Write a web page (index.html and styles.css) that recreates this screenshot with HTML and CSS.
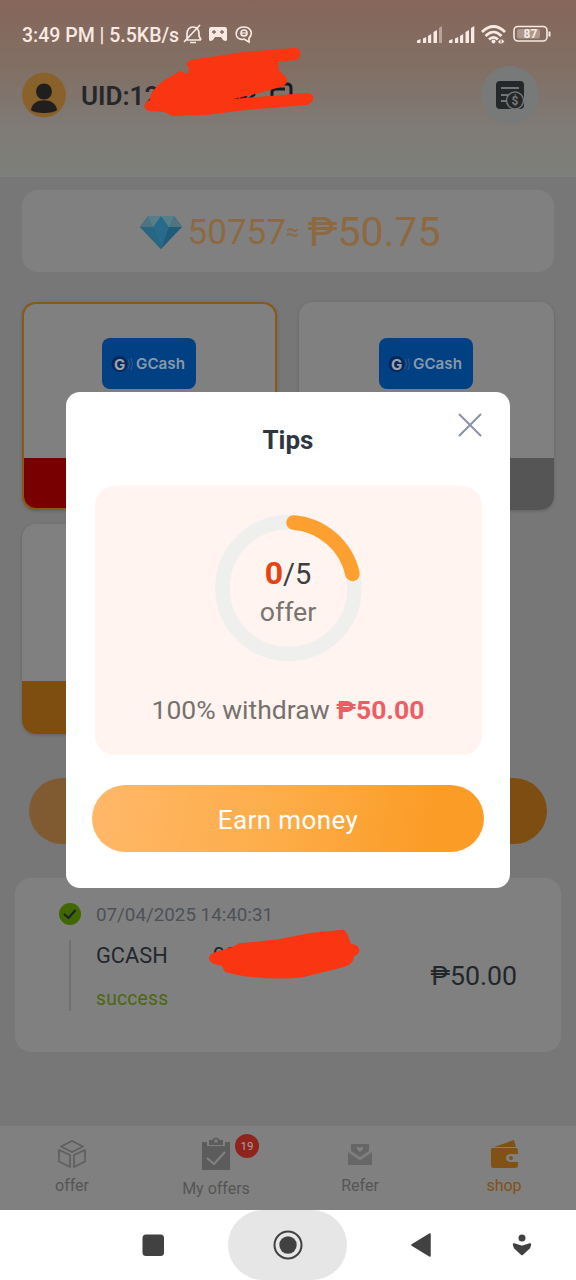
FILE: index.html
```html
<!DOCTYPE html>
<html lang="en">
<head>
<meta charset="utf-8">
<title>Shop</title>
<link rel="stylesheet" href="styles.css">
</head>
<body>
<div class="screen">
  <header class="header">
    <div class="status">
      <span class="clock">3:49 PM | 5.5KB/s</span>
      <svg class="status-left" width="74" height="24" viewBox="0 0 74 24" fill="none" stroke="#f8e9e3" stroke-width="1.7">
        <path d="M3 17H19M5 16V11C5 7 7 4 11 4S17 7 17 11V13L19 17M2 19L18 2M8 19.500H14"/>
        <path d="M29 4H43Q45 4 45 7V17Q44 19 41 17L39 14H33L31 17Q28 19 27 17V7Q27 4 29 4Z" fill="#f8e9e3" stroke="none"/>
        <path d="M32 7V11M30 9H34M38 9H42M40 7V11" stroke="#7e6d62" stroke-width="1.300"/>
        <path d="M67 15C72 10 68 4 62 4C53 4 52 14 58 16Q61 17 62 16L67 19Z"/>
        <circle cx="62" cy="10" r="3"/><path d="M60 10H64" stroke-width="1.200"/>
      </svg>
      <svg class="status-right" width="136" height="22" viewBox="0 0 136 22" fill="#f8e9e3">
        <path d="M1 16.500l3.500-1.500v4H1zM7 14.500l3.200-1.500v6H7zM12 12l3.200-2v9H12zM17.500 8L21 6v13h-3.500z"/><path d="M23 4l3-2v17h-3z" opacity=".45"/>
        <path d="M33 16.500l3.500-1.500v4H33zM39 14.500l3.200-1.500v6H39zM44 12l3.200-2v9H44zM49.500 8L53 6v13h-3.500zM55 4l3.300-2v17H55z"/>
        <g fill="none" stroke="#f8e9e3" stroke-width="2.700"><path d="M66 8Q77.500-3 89 8M69.500 12Q77.500 4 85.500 12M73 15.500Q77.500 11 82 15.500"/></g>
        <circle cx="77.500" cy="17.500" r="2"/><path d="M82 18l2.500-3v5zM85.500 15l3 2.500-3 2.500z"/>
        <rect x="98" y="2.500" width="33" height="14.500" rx="4" fill="none" stroke="#f8e9e3" stroke-width="1.600"/>
        <rect x="101" y="5" width="23" height="9.500" rx="2" opacity=".35"/><path d="M132.500 7.500h2v5h-2z"/>
        <text x="107.500" y="14.300" class="battery">87</text>
      </svg>
    </div>
    <div class="profile">
      <svg class="avatar" width="44" height="46" viewBox="0 0 44 46"><ellipse cx="22" cy="23" rx="22" ry="22.500" fill="#89622b"/><circle cx="22" cy="19.500" r="8" fill="#211f1d"/><path d="M9 38C10 25 34 25 35 38C32 42 12 42 9 38Z" fill="#211f1d"/></svg>
      <span class="uid">UID:12</span>
      <span class="bill"><svg width="30" height="30" viewBox="0 0 30 30"><rect x="1" y="1" width="28" height="28" rx="4" fill="#25282a"/><path d="M6 8H24M6 15H14M6 21H11" stroke="#737675" stroke-width="2.200"/><circle cx="20" cy="20.500" r="8.500" fill="#25282a" stroke="#737675" stroke-width="1.500"/><text x="20" y="24.500" class="dollar">$</text></svg></span>
    </div>
    <svg class="scribble scribble-top" width="180" height="76" viewBox="0 0 180 76">
      <path d="M91 53L98 51M99 52L106 49M108 52L114 47" fill="none" stroke="#171b20" stroke-width="2.500"/>
      <path d="M131 49V45Q131 42 135 42H144M135 38Q137 37 140 37H146Q150 37 150 41V48" fill="none" stroke="#171b20" stroke-width="3"/>
      <path d="M48 20C42 17 48 12 56 12L103 5L153 1C161 0 161 11 155 13L137 15L138 24L145 30Q148 35 143 39L118 46L92 52L165 46C175 45 174 57 165 58L105 63L65 68L32 69L23 65L9 64C1 63 2 55 9 53Q8 45 22 34L39 24L47 27Z" fill="#fa3511"/>
    </svg>
  </header>

  <main class="content">
    <section class="balance">
      <svg width="42" height="34" viewBox="0 0 42 34"><path d="M8 1H34L42 12L21 34L0 12Z" fill="#205b7a"/><path d="M8 1H34L42 12H0Z" fill="#4d7480"/><path d="M13 12L21 1L29 12L21 34Z" fill="#296a8b"/><path d="M8 1L13 12L21 1L29 12L34 1Z" fill="#567f8b"/><path d="M0 12H13L21 34Z" fill="#286683"/></svg>
      <span class="points">50757</span><span class="approx">≈</span><span class="peso">₱50.75</span>
    </section>
    <section class="options">
      <div class="option selected"><div class="gcash"><svg width="25" height="20" viewBox="0 0 25 20"><circle cx="9.500" cy="10" r="8" fill="#09275c"/><text x="4" y="15.500" class="g-mark">G</text><path d="M18 5Q21 10 18 15M21 4Q24 10 21 16" fill="none" stroke="#315a88"/></svg><span>GCash</span></div><div class="band red"></div></div>
      <div class="option"><div class="gcash"><svg width="25" height="20" viewBox="0 0 25 20"><circle cx="9.500" cy="10" r="8" fill="#09275c"/><text x="4" y="15.500" class="g-mark">G</text><path d="M18 5Q21 10 18 15M21 4Q24 10 21 16" fill="none" stroke="#315a88"/></svg><span>GCash</span></div><div class="band gray"></div></div>
      <div class="option"><div class="band orange"></div></div>
    </section>
    <div class="withdraw"></div>
    <section class="record">
      <div class="rail"><svg width="22" height="22" viewBox="0 0 22 22"><circle cx="11" cy="11" r="11" fill="#416800"/><path d="M5 11L9.500 15L16.500 7" fill="none" stroke="#172329" stroke-width="2.200"/></svg><i></i></div>
      <div class="details"><span class="date">07/04/2025 14:40:31</span><span class="method">GCASH <b>09</b></span><span class="success">success</span></div>
      <span class="amount">₱50.00</span>
      <svg class="scribble scribble-record" width="154" height="54" viewBox="0 0 154 54"><path d="M5 24L24 18L32 14L46 13L72 10L102 4L132 1C138 0 139 4 143 15C153 15 154 25 146 27Q146 35 136 38L96 48Q66 52 29 46L17 43L14 37L6 35C-1 32 0 26 5 24Z" fill="#fa3511"/></svg>
    </section>
  </main>

  <nav class="tabs">
    <div class="tab"><svg width="30" height="30" viewBox="0 0 30 30" fill="none" stroke="#5f5f5f" stroke-width="1.700" stroke-linejoin="round"><path d="M15 2L26 7.500L15 13L4 7.500ZM2 11L13 16V28L2 22.500ZM28 11L17 16V28L28 22.500Z"/></svg><span>offer</span></div>
    <div class="tab lower"><svg width="30" height="34" viewBox="0 0 30 34"><path d="M1 5H6V9H24V5H29V33H1ZM8 8V3H11Q15-2 19 3H22V8Z" fill="#5c5c5c"/><circle cx="15" cy="4" r="1.800" fill="#808080"/><path d="M6 21L13 27L24 15" fill="none" stroke="#808080" stroke-width="2.200"/></svg><span>My offers</span><b class="badge">19</b></div>
    <div class="tab"><svg width="30" height="30" viewBox="0 0 30 30"><path d="M6 5H24V12L15 18L6 12ZM3 13L15 21L27 13V26H3Z" fill="#666"/><path d="M15 13C9 9 13 6 15 9C17 6 21 9 15 13Z" fill="#808080"/><path d="M3 13L15 21L27 13" fill="none" stroke="#777" stroke-width="1.200"/></svg><span>Refer</span></div>
    <div class="tab active"><svg width="30" height="30" viewBox="0 0 30 30"><path d="M5 8L25 1L27 8ZM3 9H27Q29 9 29 12V15H22Q17 15 17 19T22 23H29V26Q29 29 26 29H4Q2 29 2 26V11Q2 9 3 9Z" fill="#805215"/><circle cx="22" cy="19" r="2" fill="#805215"/></svg><span>shop</span></div>
  </nav>

  <footer class="system">
    <svg width="24" height="24"><rect x="1.500" y="1.500" width="21.500" height="21.500" rx="3.500" fill="#414141"/></svg>
    <div class="home"><svg width="30" height="30"><circle cx="15" cy="15" r="13.500" fill="none" stroke="#414141" stroke-width="2"/><circle cx="15" cy="15" r="8.700" fill="#414141"/></svg></div>
    <svg class="back" width="24" height="26" viewBox="0 0 24 26"><path d="M2 13L20 2V24Z" fill="#414141" stroke="#414141" stroke-width="1.500" stroke-linejoin="round"/></svg>
    <svg class="assist" width="22" height="24" viewBox="0 0 22 24"><circle cx="11" cy="5" r="3.500" fill="#414141"/><path d="M3 11.500L11 14L19 11.500L18 14.500L11 21L4 14.500Z" fill="#414141" stroke="#414141" stroke-width="2.400" stroke-linejoin="round"/></svg>
  </footer>

  <div class="modal" role="dialog">
    <h1>Tips</h1>
    <svg class="close" width="24" height="24"><path d="M1.500 1.500L22.500 22.500M22.500 1.500L1.500 22.500" stroke="#8993a1" stroke-width="2" stroke-linecap="round"/></svg>
    <div class="panel">
      <div class="progress">
        <svg class="ring" width="148" height="148" viewBox="0 0 148 148" fill="none" stroke-width="14.500"><circle cx="74.500" cy="74" r="66" stroke="#efefed"/><path d="M79.500 8.500A66 66 0 0 1 138.500 60" stroke="#fda02f" stroke-linecap="round"/></svg>
        <div class="count"><b>0</b>/5</div><div class="offer">offer</div>
      </div>
      <p>100% withdraw <b>₱50.00</b></p>
    </div>
    <button class="earn">Earn money</button>
  </div>
</div>
</body>
</html>
```

FILE: styles.css
```css
* { box-sizing: border-box; }
body { margin: 0; font-family: Roboto, "Noto Sans", sans-serif; }
svg { display: block; flex: none; }
.screen { position: relative; width: 576px; height: 1280px; overflow: hidden; display: flex; flex-direction: column; background: #777; }
.header { position: relative; height: 177px; padding-top: 22px; background: linear-gradient(#87665a, #816f64 38%, #7f7a75 70%, #7d807b); }
.status { display: flex; height: 26px; padding: 0 24px 0 22px; align-items: center; color: #f8e9e3; }
.clock { width: 160px; font-size: 19.5px; white-space: nowrap; font-weight: 500; }
.status-right { margin-left: auto; }
.battery { font: 700 12px Roboto, sans-serif; fill: #f8e9e3; }
.profile { display: flex; align-items: center; padding: 18px 37px 0 22px; }
.uid { margin-left: 15px; padding-top: 2px; color: #24272c; font-size: 26px; font-weight: 600; }
.bill { margin-left: auto; width: 58px; height: 58px; border-radius: 50%; background: #787979; display: grid; place-items: center; }
.dollar { font: 700 12px Roboto, sans-serif; fill: #777; text-anchor: middle; }
.scribble { position: absolute; }
.scribble-top { left: 141px; top: 47px; }
.content { flex: 1; padding: 13px 22px 0; }
.balance { height: 82px; padding: 2px 0 0 4px; border-radius: 16px; background: #808080; display: flex; align-items: center; justify-content: center; color: #8d6941; }
.points { margin-left: 6px; font-size: 35px; }
.approx { font-size: 24px; }
.peso { margin-left: 8px; font-size: 41px; }
.options { display: grid; grid-template-columns: 255px 255px; grid-template-rows: 208px 210px; gap: 14px 22px; margin-top: 30px; }
.option { border-radius: 14px; background: #808080; overflow: hidden; display: flex; flex-direction: column; align-items: center; padding-top: 36px; box-shadow: 0 1px 3px #606060; }
.selected { border: 2px solid #885919; padding-top: 34px; }
.gcash { display: flex; align-items: center; justify-content: center; width: 94px; height: 51px; margin-right: 2px; border-radius: 8px; background: #004083; color: #8999a8; font: 600 15.2px Inter, sans-serif; padding-right: 2px; gap: 1px; }
.g-mark { font: 700 15px Inter, sans-serif; fill: #9ba3ae; }
.band { width: 100%; height: 52px; margin-top: auto; }
.red { height: 50px; background: #780000; }
.gray { background: #555; }
.orange { height: 53px; background: #7e4e10; }
.withdraw { height: 66px; border-radius: 33px; margin: 44px 7px 0; background: linear-gradient(90deg, #805b33, #7d4d12 75%); }
.record { position: relative; display: flex; height: 174px; border-radius: 16px; background: #808080; margin: 34px -7px 0; padding: 25px 44px 0 43px; }
.rail { width: 24px; display: flex; flex-direction: column; align-items: center; }
.rail i { width: 2px; height: 71px; background: #707070; margin-top: 15px; }
.details { margin-left: 14px; display: flex; flex-direction: column; }
.date { font-size: 18.8px; color: #4d5157; line-height: 25px; }
.method { display: flex; gap: 45px; font-size: 21.8px; color: #22272d; line-height: 26px; margin-top: 15px; }
.method b { font-weight: 400; }
.success { font-size: 19.3px; line-height: 24px; color: #4b6810; margin-top: 18px; letter-spacing: .2px; }
.amount { margin-left: auto; margin-top: 57px; font-size: 26.7px; color: #22272b; }
.scribble-record { left: 193px; top: 51px; }
.tabs { height: 84px; background: #808080; display: grid; grid-template-columns: repeat(4, 1fr); }
.tab { position: relative; display: flex; flex-direction: column; align-items: center; padding-top: 13px; color: #555; font-size: 16px; line-height: 20px; gap: 7px; }
.lower { padding-top: 11px; gap: 8px; }
.active { color: #805215; }
.badge { position: absolute; left: 91px; top: 8px; width: 24px; height: 24px; line-height: 24px; text-align: center; border-radius: 50%; background: #8e241d; color: #b3a09d; font-size: 11.5px; font-weight: 400; }
.system { height: 70px; background: #fff; display: flex; align-items: center; padding-left: 141px; }
.home { width: 119px; height: 70px; margin-left: 63px; background: #e6e6e6; border-radius: 35px; display: grid; place-items: center; }
.back { margin-left: 63px; }
.assist { margin-left: 77px; }
.modal { position: absolute; left: 66px; top: 392px; width: 444px; height: 496px; border-radius: 14px; background: #fff; display: flex; flex-direction: column; align-items: center; padding-top: 30px; }
.modal h1 { margin: 0; color: #303641; font-size: 26px; line-height: 36px; font-weight: 700; }
.close { position: absolute; right: 28px; top: 21px; }
.panel { width: 387px; height: 269px; margin-top: 28px; border-radius: 20px; background: #fff4ef; display: flex; flex-direction: column; align-items: center; padding-top: 28px; }
.progress { position: relative; width: 148px; height: 148px; text-align: center; padding-top: 41px; }
.ring { position: absolute; inset: 0; }
.count { position: relative; font-size: 29px; line-height: 36px; color: #3b3e43; }
.count b { color: #e44413; font-size: 32px; }
.offer { font-size: 26.7px; line-height: 40px; color: #79736e; }
.panel p { margin: 31px 0 0; font-size: 26.5px; line-height: 34px; color: #77716d; white-space: nowrap; }
.panel p b { color: #ee5d64; }
.earn { width: 392px; height: 67px; margin: 30px 0 0; padding: 2px 0 0; border: 0; border-radius: 34px; background: linear-gradient(100deg, #ffb869, #fdac47 50%, #fb9c27 85%); color: #fff; font: 400 26px Roboto, sans-serif; letter-spacing: .4px; }
```
